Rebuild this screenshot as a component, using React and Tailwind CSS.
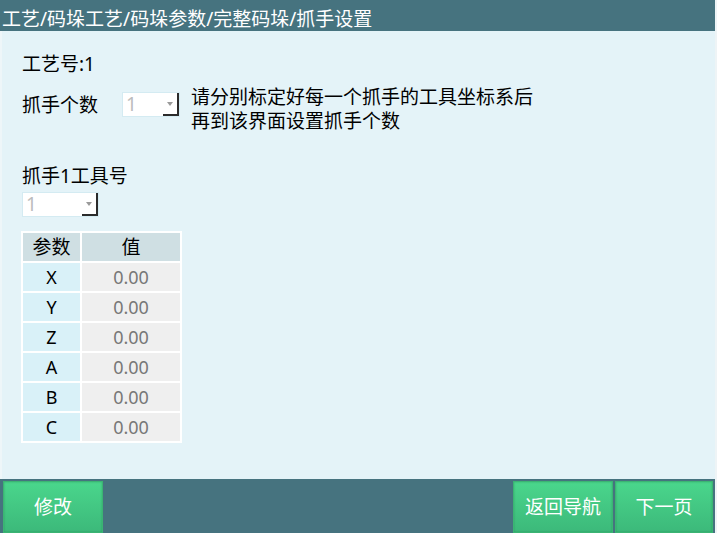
import React from 'react';

const rows = ['X', 'Y', 'Z', 'A', 'B', 'C'];

function Combo({ width }) {
  return (
    <div className={`relative h-[25px] border border-[#d4ebf2] bg-white ${width}`}>
      <span className="absolute left-[3px] top-[1px] text-[19px] leading-[21px] text-[#bcbcbc]">1</span>
      <div className="absolute right-0 top-0 flex h-full w-[16px] items-center justify-center border-b-2 border-r-2 border-[#2b2b2b]">
        <div className="h-0 w-0 border-l-[3px] border-r-[3px] border-t-[4px] border-l-transparent border-r-transparent border-t-[#9a9a9a]" />
      </div>
    </div>
  );
}

function FooterButton({ children, className = '' }) {
  return (
    <button className={`flex h-[52px] items-center justify-center border border-[#3bb473] bg-gradient-to-b from-[#4ad68c] to-[#3cb97a] text-[19px] text-white shadow-[inset_0_0_2px_rgba(0,90,40,0.35)] ${className}`}>
      {children}
    </button>
  );
}

export default function App() {
  return (
    <div
      className="flex h-[533px] w-[717px] bg-[#eef4f6] text-black"
      style={{ fontFamily: '"Noto Sans", "Noto Sans CJK SC", sans-serif' }}
    >
      <div className="flex h-full w-[715px] flex-col">
        <div className="h-[31px] bg-[#46737f] pl-[2px] pt-[10px] text-[19px] leading-[19px] text-white">
          工艺/码垛工艺/码垛参数/完整码垛/抓手设置
        </div>

        <div className="flex flex-1 flex-col border-l-2 border-[#eef6f9] bg-[#e4f3f8] pl-[20px] pt-[24px]">
          <div className="text-[19px] leading-[19px]">工艺号:1</div>

          <div className="mt-[18px] flex h-[25px] items-start">
            <div className="w-[100px] pt-[4px] text-[19px] leading-[19px]">抓手个数</div>
            <Combo width="w-[58px]" />
            <div className="-mt-[7px] ml-[11px] flex flex-col text-[19px]">
              <span className="h-[24px] leading-[24px]">请分别标定好每一个抓手的工具坐标系后</span>
              <span className="h-[24px] leading-[24px]">再到该界面设置抓手个数</span>
            </div>
          </div>

          <div className="mt-[50px] text-[19px] leading-[19px]">抓手1工具号</div>
          <div className="mt-[6px]">
            <Combo width="w-[77px]" />
          </div>

          <div className="-ml-[1px] mt-[14px] grid w-fit grid-cols-[57px_98px] gap-[2px] bg-white p-[2px]">
            <div className="flex h-[28px] items-center justify-center bg-[#cfdfe3] text-[19px]">参数</div>
            <div className="flex h-[28px] items-center justify-center bg-[#cfdfe3] text-[19px]">值</div>
            {rows.map((r) => (
              <React.Fragment key={r}>
                <div className="flex h-[28px] items-center justify-center bg-[#d9f1f8] text-[18px]">{r}</div>
                <div className="flex h-[28px] items-center justify-center bg-[#efefef] text-[18px] text-[#777777]">0.00</div>
              </React.Fragment>
            ))}
          </div>
        </div>

        <div className="flex h-[54px] items-end bg-[#46737f] pl-[3px] pr-[2px]">
          <FooterButton className="w-[100px]">修改</FooterButton>
          <div className="flex-1" />
          <FooterButton className="w-[100px]">返回导航</FooterButton>
          <FooterButton className="ml-[2px] w-[98px]">下一页</FooterButton>
        </div>
      </div>
    </div>
  );
}
